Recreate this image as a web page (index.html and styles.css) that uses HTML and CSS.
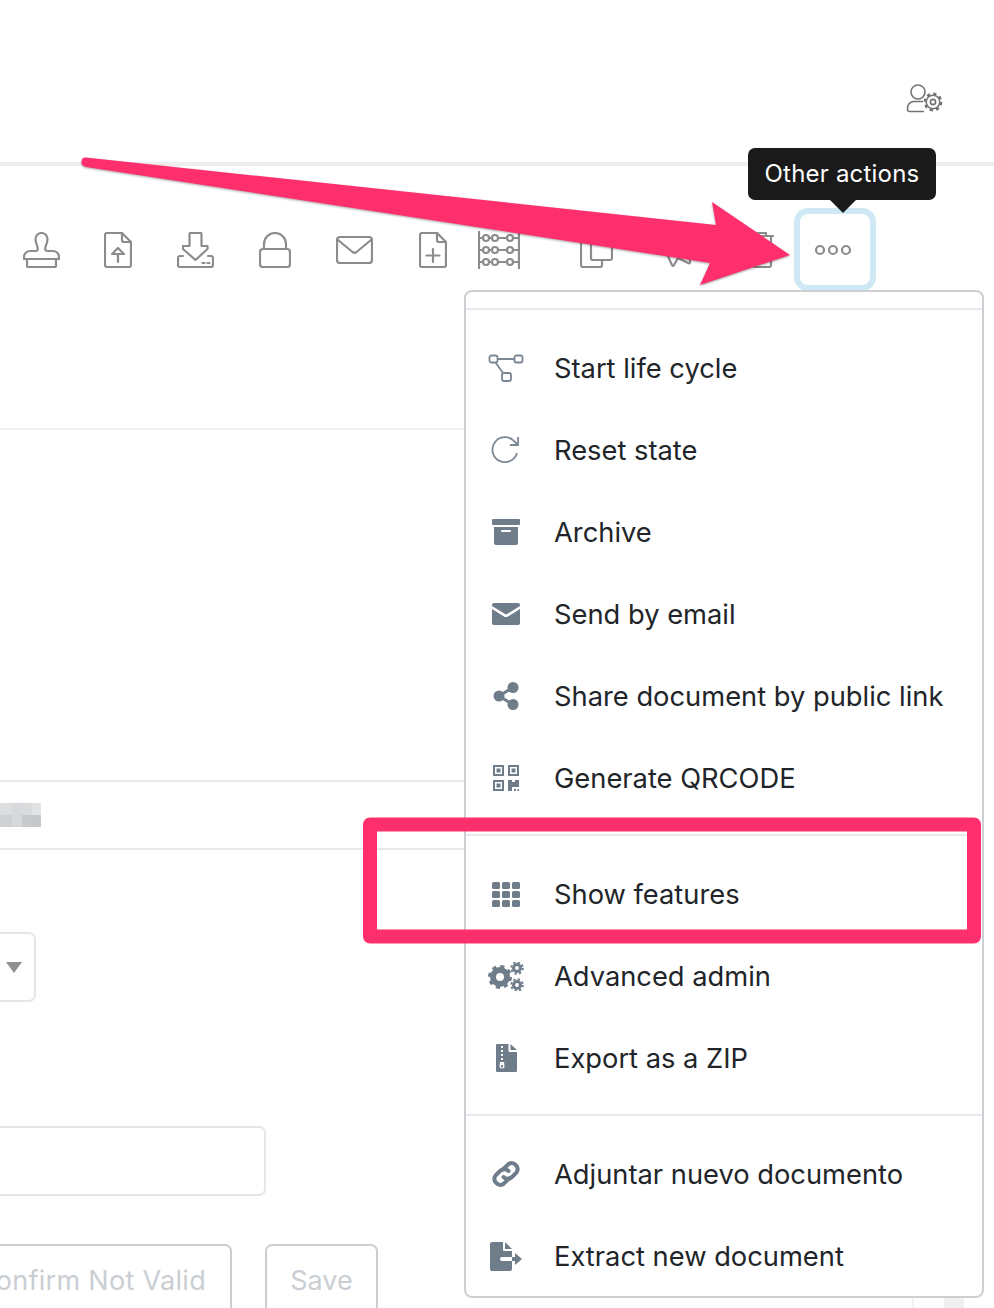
FILE: index.html
```html
<!DOCTYPE html>
<html lang="en">
<head>
<meta charset="utf-8">
<title>Other actions</title>
<link rel="stylesheet" href="styles.css">
</head>
<body>
<div class="page">
  <header class="topbar">
    <svg class="user-gear line-thin" width="38" height="30" viewBox="0 0 38 30">
      <circle cx="12" cy="9" r="7"/>
      <path d="M17 18.500 H8 a6.500 6.500 0 0 0-6.500 6.500 v2 a2 2 0 0 0 2 1.500 H18"/>
      <circle cx="27" cy="19" r="6.800"/>
      <circle class="teeth" cx="27" cy="19" r="8.200"/>
      <circle cx="27" cy="19" r="2.600"/>
    </svg>
  </header>
  <div class="rule-strong"></div>

  <div class="toolbar">
    <svg class="tool line t-stamp" width="37" height="36" viewBox="0 0 37 36">
      <path d="M1 27 v-2 a6 6 0 0 1 6-6 h6 c2 0 2-2 1.500-4 C13.500 12 12.500 10 12.500 7 a6 6 0 0 1 12 0 c0 3-1 5-2 8 c-.5 2-.5 4 1.500 4 h6 a6 6 0 0 1 6 6 v2 z"/>
      <path d="M4 27 v7 a1 1 0 0 0 1 1 h27 a1 1 0 0 0 1-1 v-7"/>
    </svg>
    <svg class="tool line t-up" width="28" height="36" viewBox="0 0 28 36">
      <path d="M3 1 h15 l9 9 v23 a2 2 0 0 1-2 2 H3 a2 2 0 0 1-2-2 V3 a2 2 0 0 1 2-2 z"/>
      <path d="M18 1 v7 a2 2 0 0 0 2 2 h7"/>
      <path d="M14 30 V22 M8 22 l6-6 6 6 z"/>
    </svg>
    <svg class="tool line t-down" width="37" height="36" viewBox="0 0 37 36">
      <path d="M12.500 14 V2 a1 1 0 0 1 1-1 h10 a1 1 0 0 1 1 1 v12 h6 v3 L18.500 28 L6 17 v-3 z"/>
      <path d="M6 24 H3 a2 2 0 0 0-2 2 v7 a2 2 0 0 0 2 2 h31 a2 2 0 0 0 2-2 v-7 a2 2 0 0 0-2-2 h-3"/>
      <path d="M25.500 31 h2 M30.500 31 h2"/>
    </svg>
    <svg class="tool line t-lock" width="32" height="36" viewBox="0 0 32 36">
      <rect x="1" y="17" width="30" height="18" rx="3"/>
      <path d="M5 17 V12 a11 11 0 0 1 22 0 v5"/>
    </svg>
    <svg class="tool line t-mail" width="37" height="28" viewBox="0 0 37 28">
      <rect x="1" y="1" width="35" height="26" rx="3"/>
      <path d="M2 4 L16.500 16 q2 1.500 4 0 L35 4"/>
    </svg>
    <svg class="tool line t-plus" width="28" height="36" viewBox="0 0 28 36">
      <path d="M3 1 h15 l9 9 v23 a2 2 0 0 1-2 2 H3 a2 2 0 0 1-2-2 V3 a2 2 0 0 1 2-2 z"/>
      <path d="M18 1 v7 a2 2 0 0 0 2 2 h7"/>
      <path d="M14 17 V30 M7.500 23.500 H20.500"/>
    </svg>
    <svg class="tool line t-abacus" width="42" height="38" viewBox="0 0 42 38">
      <path d="M1 0 V38 M41 0 V38"/>
      <path d="M1 7 H5 M11 7 H13 M20 7 H29 M35 7 H41 M1 19 H5 M11 19 H13 M20 19 H29 M35 19 H41 M1 31 H5 M11 31 H13 M20 31 H29 M35 31 H41"/>
      <circle cx="8" cy="7" r="3"/><circle cx="17" cy="7" r="3"/><circle cx="32" cy="7" r="3"/>
      <circle cx="8" cy="19" r="3"/><circle cx="17" cy="19" r="3"/><circle cx="32" cy="19" r="3"/>
      <circle cx="8" cy="31" r="3"/><circle cx="17" cy="31" r="3"/><circle cx="32" cy="31" r="3"/>
    </svg>
    <svg class="tool line t-copy" width="33" height="36" viewBox="0 0 33 36">
      <rect x="11" y="1" width="21" height="27" rx="2"/>
      <path d="M11 7 H3 a2 2 0 0 0-2 2 v24 a2 2 0 0 0 2 2 h17 a2 2 0 0 0 2-2 v-5"/>
    </svg>
    <svg class="tool line t-horn" width="30" height="36" viewBox="0 0 30 36">
      <path d="M2 20 L8 33 q1 2 2 0 L14 26 L24 31 q2 1 2-1 V12 z"/>
    </svg>
    <svg class="tool line t-bin" width="24" height="36" viewBox="0 0 24 36">
      <path d="M1 4 H23 M8 4 V1 h8 v3 M3 4 V33 a2 2 0 0 0 2 2 h14 a2 2 0 0 0 2-2 V4"/>
    </svg>
    <div class="more">
      <svg class="line-dots" width="38" height="12" viewBox="0 0 38 12">
        <circle cx="6" cy="6" r="4"/><circle cx="19" cy="6" r="4"/><circle cx="32" cy="6" r="4"/>
      </svg>
      <div class="tooltip">Other actions</div>
    </div>
  </div>

  <main class="form">
    <div class="rule rule-a"></div>
    <div class="rule rule-b"></div>
    <div class="mosaic">
      <span class="m1"></span><span class="m2"></span><span class="m3"></span><span class="m4"></span>
      <span class="m5"></span><span class="m6"></span><span class="m7"></span><span class="m8"></span>
    </div>
    <div class="rule rule-c"></div>
    <div class="select"><span class="caret"></span></div>
    <div class="input"></div>
    <div class="actions">
      <button class="btn btn-confirm">Confirm Not Valid</button>
      <button class="btn btn-save">Save</button>
      <span class="rail"></span>
      <span class="thumb"></span>
    </div>
  </main>

  <nav class="menu">
    <div class="menu-head"></div>
    <ul class="group">
      <li class="item"><span class="slot">
        <svg class="stroke-ic" width="36" height="30" viewBox="0 0 36 30">
          <rect x="1.500" y="2.500" width="8" height="7" rx="2"/><rect x="26.500" y="2.500" width="8" height="7" rx="2"/><rect x="14" y="20" width="9" height="8" rx="2"/>
          <path d="M9.500 6 H26.500 M7.500 9.500 L15 20"/>
        </svg></span><span>Start life cycle</span></li>
      <li class="item"><span class="slot">
        <svg class="stroke-ic" width="30" height="30" viewBox="0 0 30 30">
          <path d="M26 18 A12.500 12.500 0 1 1 23 6 L27 10"/>
          <path d="M27 2 V10 H19"/>
        </svg></span><span>Reset state</span></li>
      <li class="item"><span class="slot">
        <svg class="fill-ic" width="28" height="26" viewBox="0 0 28 26">
          <rect x="0" y="0" width="28" height="6" rx="1"/>
          <path d="M2 8 H26 V24 a2 2 0 0 1-2 2 H4 a2 2 0 0 1-2-2 z M10 11 a1 1 0 0 0 0 2 h8 a1 1 0 0 0 0-2 z" fill-rule="evenodd"/>
        </svg></span><span>Archive</span></li>
      <li class="item"><span class="slot">
        <svg class="fill-ic" width="28" height="22" viewBox="0 0 28 22">
          <path d="M2 0 H26 a2 2 0 0 1 2 2 V3 L15 11 q-1 .6-2 0 L0 3 V2 a2 2 0 0 1 2-2 z"/>
          <path d="M0 6 L12 13.500 q2 1 4 0 L28 6 V20 a2 2 0 0 1-2 2 H2 a2 2 0 0 1-2-2 z"/>
        </svg></span><span>Send by email</span></li>
      <li class="item"><span class="slot">
        <svg class="fill-ic" width="26" height="28" viewBox="0 0 26 28">
          <circle cx="20" cy="5.500" r="5.500"/><circle cx="6" cy="14" r="5.500"/><circle cx="20" cy="22.500" r="5.500"/>
          <path class="share-bar" d="M20 5.500 L6 14 L20 22.500"/>
        </svg></span><span>Share document by public link</span></li>
      <li class="item"><span class="slot">
        <svg class="fill-ic" width="26" height="26" viewBox="0 0 26 26">
          <path fill-rule="evenodd" d="M0 0 H11 V11 H0 z M2 2 V9 H9 V2 z M3.500 3.500 H7.500 V7.500 H3.500 z M15 0 H26 V11 H15 z M17 2 V9 H24 V2 z M18.500 3.500 H22.500 V7.500 H18.500 z M0 15 H11 V26 H0 z M2 17 V24 H9 V17 z M3.500 18.500 H7.500 V22.500 H3.500 z"/>
          <path d="M15 15 H19 V17 H22 V15 H26 V22 H19 V26 H15 z M21 24 H23 V26 H21 z M24.500 24 H26 V26 H24.500 z"/>
        </svg></span><span>Generate QRCODE</span></li>
    </ul>
    <div class="sep"></div>
    <ul class="group">
      <li class="item"><span class="slot">
        <svg class="fill-ic" width="28" height="25" viewBox="0 0 28 25">
          <rect x="0" y="0" width="8" height="7" rx="1.500"/><rect x="10" y="0" width="8" height="7" rx="1.500"/><rect x="20" y="0" width="8" height="7" rx="1.500"/>
          <rect x="0" y="9" width="8" height="7" rx="1.500"/><rect x="10" y="9" width="8" height="7" rx="1.500"/><rect x="20" y="9" width="8" height="7" rx="1.500"/>
          <rect x="0" y="18" width="8" height="7" rx="1.500"/><rect x="10" y="18" width="8" height="7" rx="1.500"/><rect x="20" y="18" width="8" height="7" rx="1.500"/>
        </svg></span><span>Show features</span></li>
      <li class="item"><span class="slot">
        <svg class="gears" width="36" height="29" viewBox="0 0 36 29">
          <circle class="g-ring" cx="12" cy="15" r="7"/><circle class="g-teeth" cx="12" cy="15" r="10.500"/>
          <circle class="s-ring" cx="29" cy="6" r="3.500"/><circle class="s-teeth" cx="29" cy="6" r="5.800"/>
          <circle class="s-ring" cx="29" cy="23" r="3.500"/><circle class="s-teeth" cx="29" cy="23" r="5.800"/>
        </svg></span><span>Advanced admin</span></li>
      <li class="item"><span class="slot">
        <svg class="fill-ic" width="21" height="28" viewBox="0 0 21 28">
          <path fill-rule="evenodd" d="M1 0 H12.500 V7 a1 1 0 0 0 1 1 H21 V27 a1 1 0 0 1-1 1 H1 a1 1 0 0 1-1-1 V1 a1 1 0 0 1 1-1 z M5 2 V4 H7 V2 z M5 6 V8 H7 V6 z M5 10 V12 H7 V10 z M5 14 V16 H7 V14 z M4 18 L3.500 22 a2.500 2.500 0 1 0 5 0 L8 18 z M6 21 a1.200 1.200 0 1 1 0 2.400 a1.200 1.200 0 1 1 0-2.400 z"/>
          <path d="M14.500 0 L21 6 H14.500 z"/>
        </svg></span><span>Export as a ZIP</span></li>
    </ul>
    <div class="sep"></div>
    <ul class="group">
      <li class="item"><span class="slot">
        <svg class="link-ic" width="30" height="30" viewBox="0 0 30 30">
          <path d="M12 10.500 L17.500 5 a6 6 0 0 1 8 8.500 L21 18 a6 6 0 0 1-8.500 0"/>
          <path d="M18 19.500 L12.500 25 a6 6 0 0 1-8-8.500 L9 12 a6 6 0 0 1 8.500 0"/>
        </svg></span><span>Adjuntar nuevo documento</span></li>
      <li class="item"><span class="slot">
        <svg class="fill-ic" width="32" height="29" viewBox="0 0 32 29">
          <path d="M2 0 H13 V8 a1 1 0 0 0 1 1 H22 V15 H12 a1.500 1.500 0 0 0 0 4 H22 V27 a2 2 0 0 1-2 2 H2 a2 2 0 0 1-2-2 V2 a2 2 0 0 1 2-2 z"/>
          <path d="M15 0 L22 7 H15 z"/>
          <path d="M22 15 H25 V11 L32 17 L25 23 V19 H22 z"/>
        </svg></span><span>Extract new document</span></li>
    </ul>
  </nav>

  <svg class="annotation" width="994" height="1308" viewBox="0 0 994 1308">
    <path class="arrow" d="M86 157.500 L716 225 L712 202 L790 255 L700 285 L710 263 L86 167 Q81 166 81.500 161.500 Q82 157 86 157.500 z"/>
    <rect class="mark" x="370" y="824.500" width="604" height="112"/>
  </svg>
</div>
</body>
</html>
```
FILE: styles.css
```css
* { box-sizing: border-box; }
html, body { margin: 0; padding: 0; background: #fff; }
body { font-family: Inter, "Liberation Sans", sans-serif; }
.page { position: relative; width: 994px; height: 1308px; overflow: hidden; background: #fff; }

svg { display: block; }
.line path, .line rect, .line circle { fill: none; stroke: #8c8c8c; stroke-width: 2.200; stroke-linejoin: round; stroke-linecap: round; }
.line-dots circle { fill: none; stroke: #8c8c8c; stroke-width: 2.200; }
.line-thin path, .line-thin circle { fill: none; stroke: #737373; stroke-width: 1.600; }
.line-thin .teeth { stroke-width: 2.400; stroke-dasharray: 3.220 3.220; }

.topbar { height: 162px; display: flex; justify-content: flex-end; padding: 83px 50px 0 0; }
.rule-strong { height: 4px; background: #eeeeee; }

.toolbar { display: flex; align-items: center; height: 83px; margin-top: 42px; padding-left: 23px; }
.t-up { margin-left: 44px; }
.t-down { margin-left: 45px; }
.t-lock { margin-left: 45px; }
.t-mail { margin-left: 45px; }
.t-plus { margin-left: 46px; }
.t-abacus { margin-left: 31px; }
.t-copy { margin-left: 60px; }
.t-horn { margin-left: 51px; }
.t-bin { margin-left: 56px; }

.more { position: relative; flex: none; width: 82px; height: 83px; margin-left: 20px; border: 6px solid #cfe9f4; border-radius: 14px; background: #fff; display: flex; align-items: center; justify-content: center; }
.more svg { margin-left: -4px; }
.tooltip { position: absolute; left: -52px; top: -66px; width: 188px; height: 52px; background: #1a1a1a; color: #fff; border-radius: 7px; font-size: 24px; line-height: 52px; text-align: center; letter-spacing: .2px; }
.tooltip::after { content: ""; position: absolute; left: 82px; top: 52px; border: 13px solid transparent; border-top-color: #1a1a1a; border-bottom-width: 0; }

.rule { width: 480px; height: 2px; background: #e8e8ec; }
.rule-a { margin-top: 137px; background: #f0f0f0; }
.rule-b { margin-top: 350px; }
.rule-c { margin-top: 21px; }
.mosaic { display: grid; grid-template-columns: 12px 10px 10px 9px; grid-template-rows: 12px 12px; width: 41px; margin-top: 21px; }
.m1 { background: #dcdee0; } .m2 { background: #d7d9dc; } .m3 { background: #d9dbdd; } .m4 { background: #e2e3e5; }
.m5 { background: #cfd1d4; } .m6 { background: #d6d8da; } .m7 { background: #c8cbce; } .m8 { background: #c6c9cc; }
.select { position: relative; width: 136px; height: 70px; margin: 82px 0 0 -100px; border: 2px solid #e6e6ea; border-radius: 7px; }
.caret { position: absolute; right: 12px; top: 28px; border: 8px solid transparent; border-top: 11px solid #8f8f8f; border-bottom-width: 0; }
.input { width: 366px; height: 70px; margin: 124px 0 0 -100px; border: 2px solid #e6e6ea; border-radius: 7px; }
.actions { display: flex; align-items: stretch; height: 72px; margin-top: 48px; }
.btn { height: 72px; background: #fff; border: 2px solid #c9ced3; border-radius: 7px; color: #c9ced3; font: 27px/1 Inter, "Liberation Sans", sans-serif; padding: 0; }
.btn-confirm { flex: none; width: 300px; margin-left: -68px; text-align: right; padding-right: 24px; letter-spacing: .3px; }
.btn-save { flex: none; width: 113px; margin-left: 33px; }
.rail { flex: none; width: 2px; margin-left: 534px; background: #f3f3f3; }
.thumb { flex: none; width: 20px; margin-left: 30px; background: #f0f0f0; }

.menu { position: absolute; left: 464px; top: 290px; width: 520px; height: 1008px; background: #fff; border: 2px solid #ccd0d4; border-radius: 8px; }
.menu-head { height: 18px; border-bottom: 2px solid #e8e8ee; }
.group { list-style: none; margin: 0; padding: 17px 0 15px; }
.sep { height: 2px; background: #e8e8ee; }
.item { display: flex; align-items: center; height: 82px; padding-left: 20px; color: #212529; font-size: 27.300px; }
.slot { flex: none; width: 40px; margin-right: 28px; display: flex; justify-content: center; }
.fill-ic { fill: #6f7d8b; }
.fill-ic .share-bar { fill: none; stroke: #6f7d8b; stroke-width: 3; }
.stroke-ic path, .stroke-ic rect { fill: none; stroke: #7a8794; stroke-width: 1.800; }
.link-ic path { fill: none; stroke: #6f7d8b; stroke-width: 4; stroke-linecap: round; }
.gears circle { fill: none; stroke: #6f7d8b; }
.gears .g-ring { stroke-width: 6; }
.gears .g-teeth { stroke-width: 3; stroke-dasharray: 4.120 4.120; }
.gears .s-ring { stroke-width: 3; }
.gears .s-teeth { stroke-width: 2; stroke-dasharray: 2.280 2.280; }

.annotation { position: absolute; left: 0; top: 0; pointer-events: none; }
.arrow { fill: #ff2f6e; filter: drop-shadow(0 1px 1px rgba(0,0,0,.35)); }
.mark { fill: none; stroke: #ff2f6e; stroke-width: 14; stroke-linejoin: round; }
```
